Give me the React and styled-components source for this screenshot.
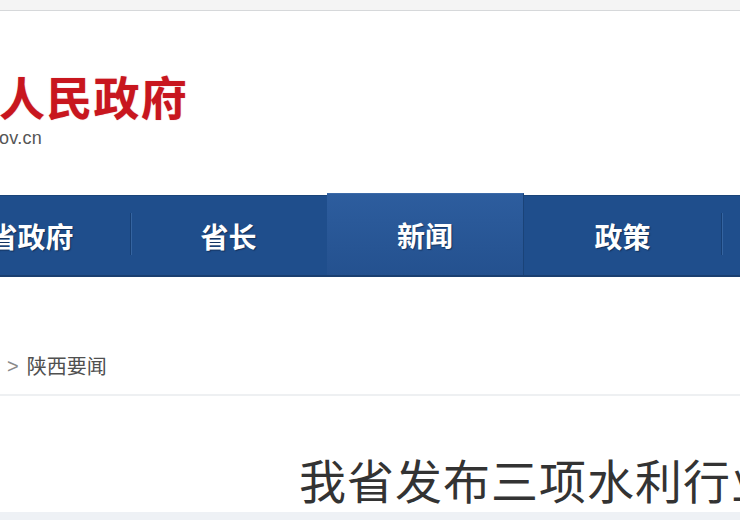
import React from 'react';
import styled, { createGlobalStyle } from 'styled-components';

const GlobalStyle = createGlobalStyle`
	html, body {
		margin: 0;
		padding: 0;
		background: #ffffff;
		overflow: hidden;
	}
	body {
		font-family: 'Noto Sans CJK SC', 'Noto Sans', sans-serif;
	}
`;

const Page = styled.div`
	width: 740px;
	height: 520px;
	overflow: hidden;
	background: #ffffff;
`;

const TopBar = styled.div`
	height: 10px;
	background: #f4f4f4;
	border-bottom: 1px solid #d6d8da;
`;

const Header = styled.div`
	height: 184px;
	padding-top: 56px;
	box-sizing: border-box;
`;

const Shift = styled.div`
	margin-left: ${(p) => p.$by}px;
	white-space: nowrap;
`;

const SiteName = styled.div`
	font-family: 'Noto Sans CJK SC', sans-serif;
	font-size: 46px;
	line-height: 56px;
	font-weight: 700;
	letter-spacing: 1.3px;
	color: #c8161e;
	text-shadow: 0 0 1px rgba(200, 22, 30, 0.5);
`;

const Domain = styled.div`
	margin-top: 4px;
	padding-left: 18px;
	font-family: 'Liberation Sans', Arial, sans-serif;
	font-size: 18px;
	line-height: 22px;
	letter-spacing: 0.3px;
	color: #555555;
`;

const NavBar = styled.div`
	height: 82px;
	background: #1f4e8c;
	border-top: 1px solid #1a4479;
	border-bottom: 2px solid #1a3f70;
	box-sizing: border-box;
	display: flex;
`;

const NavRow = styled(Shift)`
	display: flex;
`;

const NavItem = styled.div`
	position: relative;
	flex: 0 0 197px;
	display: flex;
	align-items: center;
	justify-content: center;
	font-family: 'Noto Sans CJK SC', sans-serif;
	font-size: 28px;
	font-weight: 700;
	color: #ffffff;
	text-shadow: 1px 1px 1px rgba(10, 30, 60, 0.6);
	margin-top: ${(p) => (p.$active ? '-3px' : '0')};
	background: ${(p) =>
		p.$active ? 'linear-gradient(#2d5d9e, #24518f)' : 'transparent'};
	border-top: ${(p) => (p.$active ? '1px solid #3c6aa8' : 'none')};
	border-right: ${(p) => (p.$active ? '1px solid #1a4378' : 'none')};
	box-sizing: border-box;

	&::after {
		content: '';
		display: ${(p) => (p.$divider ? 'block' : 'none')};
		position: absolute;
		right: -1px;
		top: 17px;
		height: 42px;
		width: 1px;
		background: #173f74;
		box-shadow: 1px 0 0 #3564a0;
	}
`;

const Crumbs = styled.div`
	padding-top: 77px;
	padding-bottom: 16px;
	border-bottom: 2px solid #eef0f2;
`;

const CrumbRow = styled(Shift)`
	display: flex;
	align-items: center;
	gap: 8px;
	font-size: 20px;
	line-height: 24px;
	color: #505050;
`;

const Arrow = styled.span`
	font-family: 'Liberation Sans', Arial, sans-serif;
	font-size: 20px;
	color: #8a8a8a;
`;

const TitleArea = styled.div`
	padding-top: 55px;
	padding-left: 299px;
	white-space: nowrap;
`;

const Title = styled.h1`
	margin: 0;
	font-family: 'Noto Sans CJK SC', sans-serif;
	font-size: 47px;
	line-height: 56px;
	font-weight: 400;
	letter-spacing: 1px;
	color: #333333;
`;

const BottomBand = styled.div`
	margin-top: 5px;
	height: 20px;
	background: #eef1f5;
`;

const navItems = ['首页', '省政府', '省长', '新闻', '政策', '服务', '互动'];
const activeIndex = 3;

const App = () => {
	return (
		<Page>
			<GlobalStyle />
			<TopBar />
			<Header>
				<Shift $by={-143}>
					<SiteName>陕西省人民政府</SiteName>
					<Domain>www.shaanxi.gov.cn</Domain>
				</Shift>
			</Header>
			<NavBar>
				<NavRow $by={-264}>
					{navItems.map((item, index) => (
						<NavItem
							key={item}
							$active={index === activeIndex}
							$divider={index !== activeIndex && index !== activeIndex - 1}
						>
							{item}
						</NavItem>
					))}
				</NavRow>
			</NavBar>
			<Crumbs>
				<CrumbRow $by={-41}>
					<span>首页</span>
					<Arrow>&gt;</Arrow>
					<span>陕西要闻</span>
				</CrumbRow>
			</Crumbs>
			<TitleArea>
				<Title>我省发布三项水利行业地方标准</Title>
			</TitleArea>
			<BottomBand />
		</Page>
	);
};

export default App;
